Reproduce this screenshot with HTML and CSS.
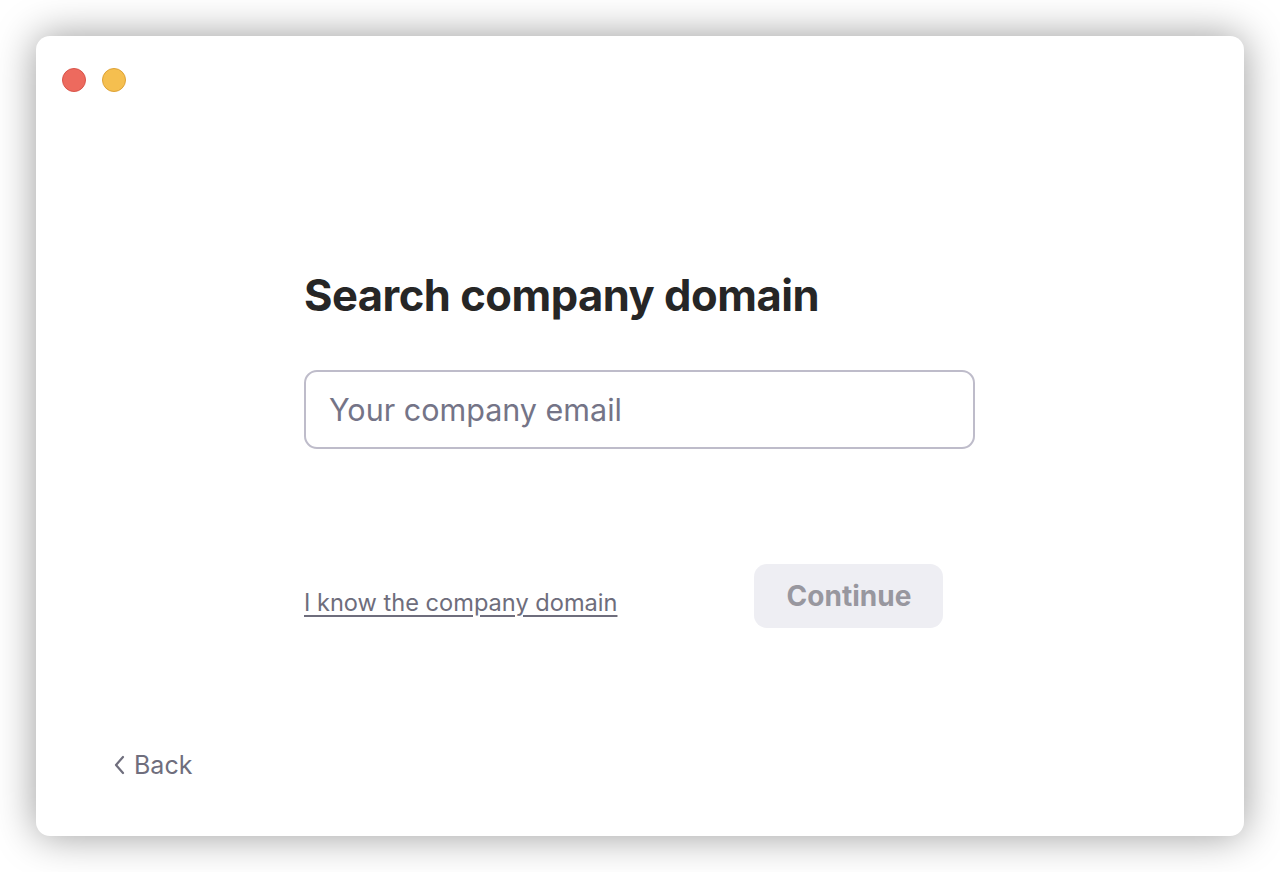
FILE: index.html
```html
<!DOCTYPE html>
<html>
<head>
<meta charset="utf-8">
<link rel="stylesheet" href="styles.css">
</head>
<body>
<div class="window">
  <div class="titlebar">
    <span class="light red"></span>
    <span class="light yellow"></span>
  </div>
  <main class="content">
    <h1 class="title">Search company domain</h1>
    <div class="field">Your company email</div>
    <div class="actions">
      <a class="link" href="#">I know the company domain</a>
      <button class="continue">Continue</button>
    </div>
  </main>
  <div class="footer">
    <a class="back" href="#">
      <svg class="chev" width="11" height="20" viewBox="0 0 11 20"><path d="M9 2 L2 10 L9 18" fill="none" stroke="#6f6e7d" stroke-width="2.2" stroke-linecap="round" stroke-linejoin="round"/></svg>
      <span>Back</span>
    </a>
  </div>
</div>
</body>
</html>
```
FILE: styles.css
```css
* { box-sizing: border-box; }
html, body { margin: 0; padding: 0; background: #ffffff; }
body {
  width: 1280px;
  height: 872px;
  padding: 36px;
  font-family: Inter, "Liberation Sans", sans-serif;
}
.window {
  width: 1208px;
  height: 800px;
  background: #fff;
  border-radius: 14px;
  box-shadow: 0 0 40px rgba(0,0,0,0.4);
  display: flex;
  flex-direction: column;
}
.titlebar {
  display: flex;
  gap: 16px;
  padding: 32px 0 0 26px;
  height: 56px;
}
.light {
  width: 24px;
  height: 24px;
  border-radius: 50%;
}
.red { background: #ed6a5e; border: 1px solid #d9544a; }
.yellow { background: #f5bf4f; border: 1px solid #dea236; }
.content {
  padding: 177px 0 0 268px;
  flex: 1;
}
.title {
  margin: 0;
  font-size: 43.5px;
  font-weight: 700;
  color: #262626;
  letter-spacing: -0.5px;
  line-height: 52px;
}
.field {
  margin-top: 49px;
  width: 671px;
  height: 79px;
  border: 2px solid #bebcca;
  border-radius: 13px;
  padding: 0 23px;
  display: flex;
  align-items: center;
  font-size: 30.5px;
  color: #747487;
}
.actions {
  margin-top: 115px;
  display: flex;
  align-items: center;
  gap: 137px;
}
.link {
  font-size: 23.6px;
  color: #6e6d7c;
  text-decoration: underline;
  text-underline-offset: 4px;
  margin-top: 12px;
}
.continue {
  width: 189px;
  height: 64px;
  border: none;
  border-radius: 13px;
  background: #eeeef3;
  color: #98979f;
  font-family: inherit;
  font-size: 28px;
  font-weight: 700;
  padding: 0;
}
.footer {
  padding: 0 0 56px 78px;
}
.back {
  display: inline-flex;
  align-items: center;
  gap: 9px;
  color: #6f6e7d;
  text-decoration: none;
  font-size: 25px;
}
```
